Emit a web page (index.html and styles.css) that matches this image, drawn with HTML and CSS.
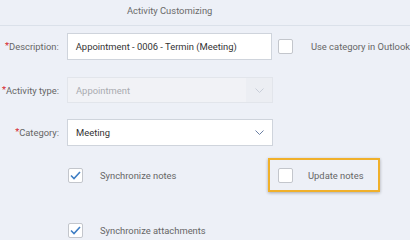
FILE: index.html
```html
<!DOCTYPE html>
<html lang="en">
<head>
    <meta charset="UTF-8">
    <title>Activity Customizing</title>
    <link rel="stylesheet" href="styles.css">
</head>
<body>
    <div class="header">Activity Customizing</div>

    <div class="form">
        <div class="row">
            <label class="label"><span class="req">*</span>Description:</label>
            <div class="input">Appointment - 0006 - Termin (Meeting)</div>
            <span class="box box-gap"></span>
            <span class="text">Use category in Outlook</span>
        </div>

        <div class="row row-short">
            <label class="label"><span class="req">*</span>Activity type:</label>
            <div class="input select disabled">
                <span class="value">Appointment</span>
                <span class="arrow">
                    <svg width="9" height="5" viewBox="0 0 9 5"><path d="M0.5 0.5 L4.5 4.5 L8.5 0.5" fill="none" stroke="#c9ced8" stroke-width="1"/></svg>
                </span>
            </div>
        </div>

        <div class="row row-last">
            <label class="label"><span class="req">*</span>Category:</label>
            <div class="input select">
                <span class="value">Meeting</span>
                <span class="arrow">
                    <svg width="9" height="5" viewBox="0 0 9 5"><path d="M0.5 0.5 L4.5 4.5 L8.5 0.5" fill="none" stroke="#6b7fa3" stroke-width="1"/></svg>
                </span>
            </div>
        </div>

        <div class="check-row first">
            <div class="check">
                <span class="box checked">
                    <svg width="11" height="9" viewBox="0 0 11 9"><path d="M1 4.5 L4 7.5 L10 1" fill="none" stroke="#3f7ec4" stroke-width="1.6"/></svg>
                </span>
                <span class="text">Synchronize notes</span>
            </div>
            <div class="highlight">
                <span class="box"></span>
                <span class="text">Update notes</span>
            </div>
        </div>

        <div class="check-row">
            <div class="check">
                <span class="box checked">
                    <svg width="11" height="9" viewBox="0 0 11 9"><path d="M1 4.5 L4 7.5 L10 1" fill="none" stroke="#3f7ec4" stroke-width="1.6"/></svg>
                </span>
                <span class="text">Synchronize attachments</span>
            </div>
        </div>
    </div>
</body>
</html>
```

FILE: styles.css
```css
body {
    margin: 0;
    background-color: #edf0f7;
    font-family: Roboto, "Liberation Sans", sans-serif;
    font-size: 9.4px;
    color: #666;
    overflow: hidden;
}
.header {
    height: 25px;
    line-height: 22px;
    padding-left: 127px;
    border-bottom: 1px solid #dbe1ea;
    color: #6a6a6a;
}
.form {
    display: flex;
    flex-direction: column;
    padding-top: 7px;
}
.row {
    display: flex;
    align-items: center;
    height: 27px;
    margin-bottom: 17px;
}
.row-short {
    height: 26px;
    margin-bottom: 16px;
}
.row-last {
    margin-bottom: 0;
}
.label {
    width: 59px;
    padding-right: 8px;
    text-align: right;
    white-space: nowrap;
}
.req {
    color: #d6262b;
    position: relative;
    top: -1px;
}
.input {
    box-sizing: border-box;
    width: 206px;
    height: 100%;
    display: flex;
    align-items: center;
    padding-left: 8px;
    background: white;
    border: 1px solid #cfd4dc;
    color: #333;
}
.select {
    padding-left: 0;
}
.select .value {
    flex: 1;
    padding-left: 8px;
}
.arrow {
    width: 26px;
    height: 100%;
    display: flex;
    align-items: center;
    justify-content: center;
}
.disabled {
    background: #f1f2f6;
    border-color: #e2e5eb;
    color: #a9abb0;
}
.disabled .arrow {
    background: #eceef3;
}
.box {
    box-sizing: border-box;
    width: 15px;
    height: 15px;
    flex: none;
    display: inline-flex;
    align-items: center;
    justify-content: center;
    background: white;
    border: 1px solid #c3c6cc;
    border-radius: 2px;
}
.box-gap {
    margin-left: 6px;
    margin-right: 18px;
}
.text {
    white-space: nowrap;
}
.check-row {
    display: flex;
    align-items: center;
    height: 34px;
    padding-left: 68px;
    margin-top: 21px;
}
.check-row.first {
    margin-top: 12px;
}
.check {
    display: flex;
    align-items: center;
    width: 200px;
}
.check .box {
    margin-right: 17px;
}
.highlight {
    box-sizing: border-box;
    width: 112px;
    height: 34px;
    display: flex;
    align-items: center;
    padding-left: 8px;
    border: 2px solid #f0b02a;
    box-shadow: 0 1px 3px rgba(0, 0, 0, 0.3);
}
.highlight .box {
    margin-right: 15px;
}
```
